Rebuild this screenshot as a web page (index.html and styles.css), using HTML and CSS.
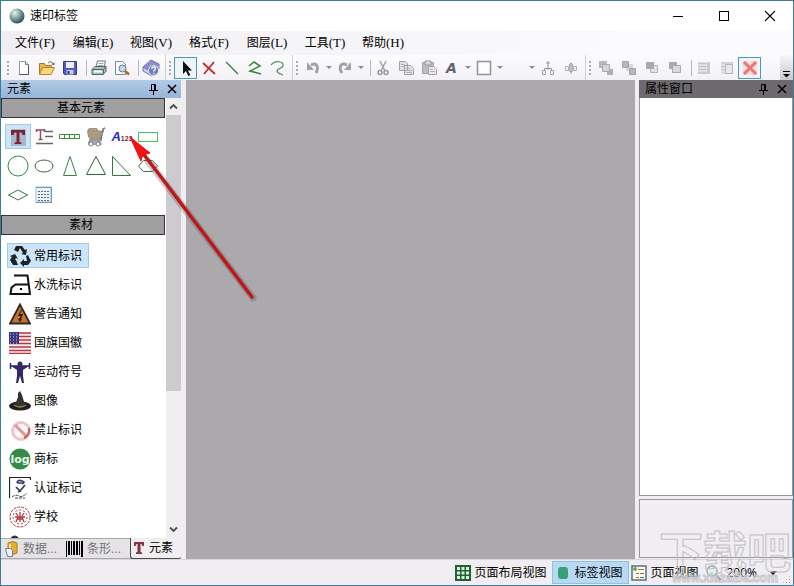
FILE: index.html
```
<!DOCTYPE html>
<html lang="zh-CN">

<head>
  <meta charset="UTF-8">
  <meta name="viewport" content="width=device-width, initial-scale=1.0">
  <title>速印标签</title>
  <link rel="stylesheet" href="styles.css">
</head>

<body>
  <div class="window">
    <header class="titlebar">
      <svg width="16" height="16" viewBox="0 0 16 16">
        <defs>
          <radialGradient id="ball" cx="35%" cy="30%" r="75%">
            <stop offset="0" stop-color="#eef5f0" />
            <stop offset="0.45" stop-color="#86a9a2" />
            <stop offset="1" stop-color="#2e3f5c" />
          </radialGradient>
        </defs>
        <circle cx="8" cy="8" r="7.5" fill="url(#ball)" />
      </svg>
      <h1 class="title">速印标签</h1>
      <div class="window-buttons">
        <button class="window-button" aria-label="最小化"><svg width="12" height="12"><path d="M1 6.500h10" stroke="#000" /></svg></button>
        <button class="window-button" aria-label="最大化"><svg width="12" height="12"><rect x="1.500" y="1.500" width="9" height="9" fill="none" stroke="#000" /></svg></button>
        <button class="window-button" aria-label="关闭"><svg width="12" height="12"><path d="M1 1l10 10M11 1L1 11" stroke="#000" stroke-width="1.100" /></svg></button>
      </div>
    </header>

    <nav class="menubar">
      <button class="menu">文件<span class="key">(F)</span></button>
      <button class="menu">编辑<span class="key">(E)</span></button>
      <button class="menu">视图<span class="key">(V)</span></button>
      <button class="menu">格式<span class="key">(F)</span></button>
      <button class="menu">图层<span class="key">(L)</span></button>
      <button class="menu">工具<span class="key">(T)</span></button>
      <button class="menu">帮助<span class="key">(H)</span></button>
    </nav>

    <div class="toolbar">
      <div class="strip">
        <span class="grip"></span>
        <button class="tool" aria-label="新建"><svg width="16" height="16"><path d="M3.500 1.500h6l3 3v10h-9z" fill="#fdfdff" stroke="#8a95ab" /><path d="M9.500 1.500v3h3" fill="#cfd8e6" stroke="#73809a" /><path d="M12.500 5v9.500h-9" fill="none" stroke="#46536e" /></svg></button>
        <button class="tool" aria-label="打开"><svg width="18" height="16"><path d="M1.500 14V3.500h5l1 2h6V8" fill="#e8b64a" stroke="#a87a20" /><path d="M1.500 14.500l3-7h12l-3.500 7z" fill="#fbd877" stroke="#b3842a" /><path d="M10 3q3-3 5 1" fill="none" stroke="#596a86" /><path d="M16.500 2v3h-3z" fill="#596a86" /></svg></button>
        <button class="tool" aria-label="保存"><svg width="16" height="16"><path d="M1.500 1.500h13v13h-12l-1-1z" fill="#5759bb" stroke="#3b3a88" /><path d="M4 2h8v6H4z" fill="#edf0fb" /><path d="M4.500 10h7v4.500h-7z" fill="#c9cce8" /><path d="M5.500 11h2v3h-2z" fill="#333572" /></svg></button>
        <span class="divider"></span>
        <button class="tool" aria-label="打印"><svg width="16" height="16"><path d="M5 7l1.500-6h8L13 7" fill="#f5f9fb" stroke="#6c7c80" /><path d="M7.500 3.500h5M7 5.500h5" stroke="#9aa" /><path d="M1 9.500L4 6.500h11v5l-3 3H1z" fill="#abc0b8" stroke="#4e6761" /><path d="M1 9.500h11.500v5M12.500 9.500l2.500-3" fill="none" stroke="#4e6761" /><path d="M3 11.500h8" stroke="#f4fff6" stroke-width="2" /></svg></button>
        <button class="tool" aria-label="打印预览"><svg width="16" height="16"><path d="M1.500 1.500h7l3 3v10h-10z" fill="#fafbff" stroke="#7b879d" /><circle cx="8.500" cy="8.500" r="3.500" fill="#c2d9ed" stroke="#6c7788" /><path d="M11 11l4 3.500" stroke="#a56b2b" stroke-width="2.500" /></svg></button>
        <span class="divider"></span>
        <button class="tool" aria-label="帮助"><svg width="18" height="18"><path d="M1 8l8-7 8 4-7 8z" fill="#8d90ca" stroke="#7276b4" /><path d="M1 8v4l9 5 7-7V5l-7 8z" fill="#c9cde8" stroke="#7276b4" /><circle cx="11.500" cy="11.500" r="5" fill="#6680b5" stroke="#e1e6f4" /><path d="M9.700 10q.3-2 2-2 1.900.2 1.700 1.800-.2 1-1.600 1.700v1M11.800 13.700v1.200" fill="none" stroke="#fff" stroke-width="1.300" /></svg></button>
      </div>
      <div class="strip">
        <span class="grip"></span>
        <button class="tool active" aria-label="选择"><svg width="16" height="18"><path d="M5 2v13l3-3 2.300 5 2-1-2.300-4.500H14z" fill="#111" /></svg></button>
        <button class="tool" aria-label="删除"><svg width="16" height="16"><path d="M2 3l12 11M13 2L3 14" stroke="#ca2a25" stroke-width="1.800" /></svg></button>
        <button class="tool" aria-label="直线"><svg width="16" height="16"><path d="M2 2l12 12" stroke="#2d7a3a" stroke-width="1.200" /></svg></button>
        <button class="tool" aria-label="折线"><svg width="16" height="16"><path d="M2 6l5-4 6 4-10 5 11 3" fill="none" stroke="#2c8a37" stroke-width="1.500" /></svg></button>
        <button class="tool" aria-label="曲线"><svg width="16" height="16"><path d="M1 5C5 0 14 1 13 6c-1 3-6 2-6 5 0 2 4 3 6 4" fill="none" stroke="#4d8c5e" stroke-width="1.200" /></svg></button>
      </div>
      <div class="strip">
        <span class="grip"></span>
        <button class="tool" aria-label="撤消"><svg width="16" height="16"><path d="M6 5c6-3 8 2 5 8" fill="none" stroke="#a2a2a6" stroke-width="3" /><path d="M2 2v8h7z" fill="#a2a2a6" /></svg></button>
        <button class="drop" aria-label="撤消列表"></button>
        <button class="tool" aria-label="重做"><svg width="16" height="16"><path d="M10 5C4 2 1 7 5 13" fill="none" stroke="#a2a2a6" stroke-width="3" /><path d="M14 2v8H7z" fill="#a2a2a6" /></svg></button>
        <button class="drop" aria-label="重做列表"></button>
        <span class="divider"></span>
        <button class="tool" aria-label="剪切"><svg width="16" height="16"><path d="M5 1l5 10M11 1L6 11" stroke="#a2a2a6" stroke-width="1.500" /><circle cx="5" cy="12.500" r="2" fill="none" stroke="#98989c" stroke-width="1.500" /><circle cx="11" cy="12.500" r="2" fill="none" stroke="#98989c" stroke-width="1.500" /></svg></button>
        <button class="tool" aria-label="复制"><svg width="16" height="16"><path d="M1.500 1.500h6l2 2v7h-8zM6.500 5.500h6l3 3v6h-9z" fill="#e2e2e4" stroke="#a2a2a6" /><path d="M3 4.500h4M3 6.500h3M8 8.500h4M8 10.500h6M8 12.500h6" stroke="#b2b2b5" /></svg></button>
        <button class="tool" aria-label="粘贴"><svg width="16" height="16"><path d="M1.500 2.500h11v11h-11z" fill="#bdbdc1" stroke="#a2a2a6" /><path d="M4 1h6v4H4z" fill="#d9d9dc" stroke="#9b9b9f" /><path d="M7.500 6.500h5l3 3v5h-8z" fill="#e9e9eb" stroke="#a2a2a6" /><path d="M9 9.500h3M9 11.500h5" stroke="#b2b2b5" /></svg></button>
        <button class="tool font-tool">A</button>
        <button class="drop" aria-label="字体列表"></button>
        <button class="tool" aria-label="边框"><svg width="16" height="16"><rect x="1.500" y="1.500" width="13" height="13" fill="#fdfdfd" stroke="#929296" stroke-width="1.500" /></svg></button>
        <button class="drop" aria-label="边框列表"></button>
        <button class="tool" aria-label="线型"></button>
        <button class="drop" aria-label="线型列表"></button>
        <button class="tool" aria-label="组合"><svg width="14" height="16"><path d="M7 1v9M5 3h4M3.500 10V8.500h7V10" fill="none" stroke="#98989c" /><path d="M1.500 10.500h3v4h-3zM9.500 10.500h3v4h-3z" fill="#f1f1f3" stroke="#a4a4a8" /></svg></button>
        <button class="tool" aria-label="取消组合"><svg width="14" height="16"><path d="M1.500 6.500h3v4h-3zM9.500 6.500h3v4h-3zM5.500 5.500h3v6h-3z" fill="#f1f1f3" stroke="#b0b0b4" /><path d="M7 3v11M5 5l2-2 2 2" fill="none" stroke="#98989c" /></svg></button>
      </div>
      <div class="strip last">
        <span class="grip"></span>
        <button class="tool" aria-label="置于顶层"><svg width="16" height="16"><path d="M1 1h8v7H1z" fill="#b8b8bb" /><path d="M9 9h6v6H9z" fill="#b0b0b4" /><path d="M4.500 4.500h7v7h-7z" fill="#d5d5d8" stroke="#a9a9ad" /></svg></button>
        <button class="tool" aria-label="置于底层"><svg width="16" height="16"><path d="M5 4h7v7H5z" fill="#d9d9dc" /><path d="M1.500 1.500h6v6h-6zM8.500 8.500h6v6h-6z" fill="#b8b8bc" stroke="#a4a4a8" /></svg></button>
        <button class="tool" aria-label="上移一层"><svg width="16" height="16"><path d="M6.500 5.500h7v7h-7z" fill="#e2e2e5" stroke="#b4b4b8" /><path d="M2 2h8v7H2z" fill="#aaaaae" /></svg></button>
        <button class="tool" aria-label="下移一层"><svg width="16" height="16"><path d="M2 2h8v7H2z" fill="#aaaaae" /><path d="M5.500 5.500h8v7h-8z" fill="#dadadd" stroke="#a9a9ad" /></svg></button>
        <span class="divider"></span>
        <button class="tool" aria-label="左侧窗格"><svg width="16" height="16"><path d="M2 2h12v12H2z" fill="#e0e0e3" /><path d="M11 2h3v12H2v-2h9z" fill="#cbcbcf" /><path d="M2 3.500h8M2 6.500h8M2 9.500h8" stroke="#c4c4c8" /></svg></button>
        <button class="tool" aria-label="右侧窗格"><svg width="16" height="16"><path d="M2 2h12v12H2z" fill="#e0e0e3" /><path d="M6.500 4.500h7v9h-7z" fill="#e8e8ea" stroke="#b4b4b8" /><path d="M2 3h12M2 6.500h3M2 9.500h3" stroke="#c4c4c8" /></svg></button>
        <button class="tool active" aria-label="显示网格"><svg width="16" height="16"><path d="M1 1h14v14H1z" fill="#f3d4d4" /><path d="M2 2l12 12M14 2L2 14" stroke="#ed7673" stroke-width="3" /><path d="M8 1v4M8 11v4M1 8h4M11 8h4" stroke="#fff" /></svg></button>
      </div>
      <button class="overflow" aria-label="更多"><svg width="9" height="8"><path d="M1 1.500h7" stroke="#000" /><path d="M1 4h7L4.500 7.500z" /></svg></button>
    </div>

    <main class="workspace">
      <aside class="panel elements">
        <div class="panel-head">
          <h2 class="panel-title">元素</h2>
          <button class="panel-button" aria-label="固定"><svg width="9" height="12"><path d="M2.500 7V1.500h4V7M0 7.500h9M4.500 8v4" fill="none" stroke="#000" /><path d="M5.500 2v5" stroke="#000" /></svg></button>
          <button class="panel-button" aria-label="关闭"><svg width="10" height="10"><path d="M1 1l8 8M9 1L1 9" stroke="#000" stroke-width="1.500" /></svg></button>
        </div>
        <div class="panel-body">
          <div class="groups">
            <h3 class="group-title">基本元素</h3>
            <div class="shapes">
              <button class="shape selected" aria-label="文本"><svg width="20" height="20"><rect x="3" y="2" width="15" height="17" fill="#a6bac9" /><path d="M3 3h14v5h-2.500L13.500 5.500h-2V15l2 .5V17h-7v-1.500l2-.5V5.500h-2L5.500 8H3z" fill="#7c2434" /></svg></button>
              <button class="shape" aria-label="多行文本"><svg width="20" height="20"><path d="M2 3h9M6.500 3v9M4.500 12.500h4M2.500 2v3M10.500 2v3" stroke="#93525a" stroke-width="1.500" /><path d="M11 4.500h8M11 9.500h8M2 16.500h17" stroke="#666" stroke-width="1.500" /></svg></button>
              <button class="shape" aria-label="条码"><svg width="22" height="20"><path d="M.5 7.500h20v4H.5zM5.500 7.500v4M10.500 7.500v4M15.500 7.500v4" fill="none" stroke="#38913c" /></svg></button>
              <button class="shape" aria-label="图片"><svg width="22" height="22"><path d="M2 5l2-3h8l1 2 3 1v8H5L3 11z" fill="#a19588" /><path d="M5 4h6M4 7h10M5 10h9" stroke="#c9a26e" /><path d="M20 2l-2 1-2 11H4M16 6l3-1" fill="none" stroke="#77777b" stroke-width="1.500" /><path d="M3 15h13l1 4H3z" fill="#a9a9ad" /><circle cx="6" cy="18" r="2" fill="#fff" stroke="#777" /><circle cx="13" cy="18" r="2" fill="#fff" stroke="#777" /></svg></button>
              <button class="shape counter" aria-label="序列号"><span class="letter">A</span><span class="digits">123</span></button>
              <button class="shape" aria-label="矩形"><svg width="22" height="20"><rect x="1.500" y="5.500" width="19" height="9" fill="none" stroke="#4fc45a" /></svg></button>
              <button class="shape" aria-label="圆"><svg width="22" height="22"><circle cx="11" cy="11" r="10" fill="none" stroke="#358b3f" /></svg></button>
              <button class="shape" aria-label="椭圆"><svg width="22" height="20"><ellipse cx="11" cy="10" rx="9" ry="6" fill="none" stroke="#3d6644" /></svg></button>
              <button class="shape" aria-label="锐角三角形"><svg width="22" height="22"><path d="M11 1.500L4.500 20.500h13z" fill="none" stroke="#36823e" /></svg></button>
              <button class="shape" aria-label="三角形"><svg width="22" height="22"><path d="M11 1.500L1.500 19.500h19z" fill="none" stroke="#306a38" /></svg></button>
              <button class="shape" aria-label="直角三角形"><svg width="22" height="22"><path d="M1.500 1.500v19h18z" fill="none" stroke="#2f7b38" /></svg></button>
              <button class="shape" aria-label="六边形"><svg width="22" height="20"><path d="M1.500 10l5-5.500h9L20.500 10l-5 5.500h-9z" fill="none" stroke="#3d7145" /></svg></button>
              <button class="shape" aria-label="菱形"><svg width="22" height="20"><path d="M1.500 10L11 5l9.500 5-9.500 5z" fill="none" stroke="#357a3c" /></svg></button>
              <button class="shape" aria-label="表格"><svg width="18" height="18"><rect x="1" y="1" width="15" height="15" fill="#eef5fa" stroke="#9ac0d8" /><path d="M1 1.500h16M1 16.500h16M16.500 1v16" stroke="#7899b6" /><path d="M3 5.500h12M3 8.500h12M3 11.500h12M3 14.500h12" stroke="#596a83" stroke-dasharray="2 1" /></svg></button>
            </div>
            <h3 class="group-title">素材</h3>
            <div class="materials">
              <button class="material selected"><svg width="22" height="22"><g fill="#1c2326"><path d="M7 1h6l3 4 2-1-1 6-5-1 2-1-3-5-2 4-4-2z" /><path d="M17 11l2-1 3 6-3 4h-4v2l-4-4 4-4v2h3z" /><path d="M9 20H4l-3-5 2-3-2-1 5-2 3 5-2-1-1 2h1z" /></g></svg>常用标识</button>
              <button class="material"><svg width="22" height="22"><path d="M5 1.500h13.500l2.500 18.500H1.500l1-6.500 4-3h13" fill="none" stroke="#111" stroke-width="2" /><path d="M11 14h2v2h-2z" /></svg>水洗标识</button>
              <button class="material"><svg width="22" height="22"><path d="M11 1.500L1 20.500h20z" fill="#bd7433" stroke="#34271e" stroke-width="1.800" /><path d="M12 7l-3 6h3l-2 3h-1l2 3 2-3h-1l2-5h-3l2-4z" fill="#2d1712" /></svg>警告通知</button>
              <button class="material"><svg width="22" height="22"><path d="M0 0h22v22H0z" fill="#eee" /><path d="M0 1h22M0 4.500h22M0 8h22M0 11.500h22M0 15h22M0 18.500h22M0 21.500h22" stroke="#bd3542" stroke-width="1.700" /><path d="M0 0h10v12H0z" fill="#35367d" /><path d="M1 2h8M1 5h8M1 8h8M1 11h8" stroke="#d8daf1" stroke-dasharray="1 2" /></svg>国旗国徽</button>
              <button class="material"><svg width="22" height="22"><circle cx="11" cy="3" r="2.500" fill="#342668" /><path d="M1 5h20M1.500 2v6M20.500 2v6" stroke="#342668" stroke-width="1.500" /><path d="M2 5h18l-6 4v6l1 7h-2l-2-7-2 7H7l1-7V9z" fill="#342668" /></svg>运动符号</button>
              <button class="material"><svg width="22" height="22"><ellipse cx="11" cy="16" rx="11" ry="4.500" fill="#202020" /><path d="M6 15l3-8V3l2-2 2 4 3 10q-5 4-10 0z" fill="#353230" /><path d="M5 15q6 4 12 0" fill="none" stroke="#988845" stroke-width="1.500" /></svg>图像</button>
              <button class="material"><svg width="22" height="22"><circle cx="12" cy="12" r="8.500" fill="#fdf6f6" stroke="#edc6c6" stroke-width="3" /><path d="M6 6l12 12" stroke="#e09797" stroke-width="3" /><path d="M20 9q1 7-5 10" fill="none" stroke="#c96060" stroke-width="2" /></svg>禁止标识</button>
              <button class="material"><svg width="22" height="22"><circle cx="11" cy="11" r="10.500" fill="#348a46" /><text class="logo-text" x="11" y="15" text-anchor="middle">log</text></svg>商标</button>
              <button class="material"><svg width="22" height="22"><path d="M.5 21V.5h21V3" fill="none" stroke="#222" stroke-width="1.200" /><path d="M8 6q1-4 5-2 4 1 0 3M8 6h6M7 10l4 4 5-6M9 15l3-1" fill="none" stroke="#343b6c" stroke-width="1.700" /><path d="M3 20q4-3 7-1t8-3M6 21h10" fill="none" stroke="#444" stroke-dasharray="3 1" /></svg>认证标记</button>
              <button class="material"><svg width="22" height="22" fill="none" stroke="#ad383c"><circle cx="11" cy="11" r="10" stroke-dasharray="3 1" /><circle cx="11" cy="11" r="7" stroke-dasharray="2 2" /><path d="M7 7l2 3M15 7l-2 3M11 6v10M7 16l2-5M15 16l-2-5M6 11h10M8 13h6" stroke-width="1.300" /></svg>学校</button>
              <button class="material" aria-label="其他"><svg width="22" height="22"><path d="M2 2q4-3 7 0l3 5H5z" fill="#333" /></svg></button>
            </div>
          </div>
          <div class="scrollbar">
            <button class="scroll-button" aria-label="向上"><svg width="9" height="7"><path d="M1 5.500L4.500 2 8 5.500" fill="none" stroke="#505050" stroke-width="1.800" /></svg></button>
            <div class="track"><div class="thumb"></div></div>
            <button class="scroll-button" aria-label="向下"><svg width="9" height="7"><path d="M1 1.500L4.500 5 8 1.500" fill="none" stroke="#505050" stroke-width="1.800" /></svg></button>
          </div>
        </div>
        <div class="tabs">
          <button class="tab"><svg width="16" height="18"><path d="M4 3q5-3 9 0v10q-4 3-9 0z" fill="#e4ae34" stroke="#aa7c22" /><path d="M6 4v9" stroke="#ffe495" stroke-width="2" /><path d="M1.500 8.500h5l2 2v6h-5z" fill="#eef5ff" stroke="#6b7f9c" /></svg>数据...</button>
          <button class="tab barcode"><svg width="17" height="16"><path d="M0 0h1v16H0zM2 0h2v14H2zM5 0h1v14H5zM7 0h2v14H7zM10 0h2v14h-2zM13 0h1v14h-1zM15 0h2v16h-2z" /></svg>条形...</button>
          <button class="tab current"><svg width="10" height="12"><path d="M0 0h10v4H8.500L7.500 2H6.500v8l1.500.5V12H2v-1.500L3.500 10V2h-1l-1 2H0z" fill="#8b303e" /></svg>元素</button>
        </div>
      </aside>

      <section class="canvas"></section>

      <aside class="panel properties">
        <div class="panel-head dark">
          <h2 class="panel-title">属性窗口</h2>
          <button class="panel-button" aria-label="固定"><svg width="9" height="12"><path d="M2.500 7V1.500h4V7M0 7.500h9M4.500 8v4" fill="none" stroke="#000" /><path d="M5.500 2v5" stroke="#000" /></svg></button>
          <button class="panel-button" aria-label="关闭"><svg width="10" height="10"><path d="M1 1l8 8M9 1L1 9" stroke="#000" stroke-width="1.500" /></svg></button>
        </div>
        <div class="property-list"></div>
        <div class="property-help"></div>
      </aside>
    </main>

    <footer class="statusbar">
      <button class="view"><svg width="16" height="16"><path d="M0 0h16v16H0z" fill="#245e36" /><path d="M2 2h3v3H2zM6.500 2h3v3h-3zM11 2h3v3h-3zM2 6.500h3v3H2zM6.500 6.500h3v3h-3zM11 6.500h3v3h-3zM2 11h3v3H2zM6.500 11h3v3h-3zM11 11h3v3h-3z" fill="#d6f5d3" /></svg>页面布局视图</button>
      <button class="view current"><svg width="16" height="16"><rect x="3" y="2" width="10" height="12" rx="3" fill="#36a178" /></svg>标签视图</button>
      <button class="view"><svg width="16" height="16"><rect x="1" y="1" width="14" height="14" fill="#fff9e9" stroke="#51708a" stroke-width="1.500" /><circle cx="4" cy="4" r="2" fill="#6daa48" /><path d="M7 4.500h6M5 8.500h3M5 12.500h3" stroke="#b56c32" /><path d="M9 8.500h4M9 12.500h4" stroke="#596c8c" /></svg>页面视图</button>
      <button class="zoom"><svg width="16" height="16"><circle cx="6" cy="6" r="5" fill="#e4f1f5" stroke="#8ba99f" stroke-width="1.300" /><path d="M10 10l4.500 5" stroke="#777baf" stroke-width="2.500" /></svg>200%<i class="caret"></i></button>
      <span class="resizer"></span>
    </footer>
  </div>

  <!-- pointer to the serial number element -->
  <svg class="pointer" width="140" height="180">
    <path d="M24 29L129 166" stroke="#555" stroke-opacity="0.3" stroke-width="7" stroke-linecap="round" />
    <path d="M18 20l110 145" stroke="#bf181c" stroke-width="3.500" stroke-linecap="round" />
    <path d="M6 5l20 16-4 1-4 3-1 4z" fill="#f31313" stroke="#dc1515" />
  </svg>

  <div class="watermark">
    <div class="watermark-name">下载吧</div>
    <div class="watermark-site">www.xiazaiba.com</div>
  </div>
</body>

</html>
```
FILE: styles.css
```
* {
  box-sizing: border-box;
}

body {
  margin: 0;
  height: 100vh;
  overflow: hidden;
  position: relative;
  font-family: "Liberation Sans", "Noto Sans CJK SC", sans-serif;
  font-size: 12px;
  line-height: 16px;
  color: #000;
}

button {
  display: flex;
  align-items: center;
  flex: none;
  margin: 0;
  padding: 0;
  border: 0;
  background: none;
  color: inherit;
  font: inherit;
  white-space: nowrap;
}

svg {
  display: block;
  flex: none;
}

h1,
h2,
h3 {
  margin: 0;
  font-size: 12px;
  font-weight: normal;
}

.window {
  display: flex;
  flex-direction: column;
  height: 100%;
  border: 1px solid #3c7d9d;
  background: #f0eef1;
}

/* title and menus */
.titlebar {
  display: flex;
  align-items: center;
  flex: none;
  height: 30px;
  padding-left: 8px;
  gap: 5px;
  background: #fff;
}

.window-buttons {
  display: flex;
  margin-left: auto;
}

.window-button {
  justify-content: center;
  width: 46px;
  height: 28px;
}

.menubar {
  display: flex;
  flex: none;
  height: 24px;
  padding-left: 5px;
  background: linear-gradient(90deg, #f0eef2, #fbfafc 80%);
}

.menu {
  justify-content: center;
  min-width: 58px;
}

.key {
  font-family: "Liberation Serif", serif;
  font-size: 13px;
}

/* toolbar */
.toolbar {
  display: flex;
  flex: none;
  height: 25px;
  padding-left: 5px;
  gap: 2px;
  background: linear-gradient(#fcfbfd, #f3f1f5);
}

.strip {
  display: flex;
  align-items: center;
  padding-right: 3px;
  border-right: 1px solid #cfcfd4;
}

.strip.last {
  border-right: 0;
}

.grip {
  width: 6px;
  height: 15px;
  background: radial-gradient(circle, #aaaab0 1px, transparent 1px) 0 0 / 4px 4px repeat-y;
}

.divider {
  width: 6px;
  height: 16px;
  border-right: 1px solid #b8b8bf;
}

.tool {
  justify-content: center;
  width: 23px;
  height: 22px;
}

.tool.active {
  border: 1px solid #4d99b8;
  background: #eef5fa;
}

.font-tool {
  font-family: "DejaVu Sans", sans-serif;
  font-size: 14px;
  font-weight: bold;
  font-style: italic;
  color: #626268;
}

.drop {
  justify-content: center;
  width: 9px;
  height: 22px;
}

.drop::after,
.caret {
  content: "";
  border: 3px solid transparent;
  border-top-color: #8d8d93;
  border-bottom: 0;
}

.overflow {
  justify-content: center;
  align-items: flex-end;
  width: 13px;
  margin-left: auto;
  padding-bottom: 2px;
  background: linear-gradient(#f6f5f8, #c9c8ce);
}

/* docked panels */
.workspace {
  display: flex;
  flex: 1;
  min-height: 0;
}

.panel {
  display: flex;
  flex-direction: column;
  flex: none;
}

.elements {
  width: 180px;
}

.properties {
  width: 154px;
  margin-left: 4px;
}

.panel-head {
  display: flex;
  align-items: center;
  flex: none;
  height: 18px;
  padding: 0 4px 0 6px;
  gap: 7px;
  background: linear-gradient(#b2cae5, #96b5d8);
}

.panel-head.dark {
  padding-right: 6px;
  background: #6c6a6d;
}

.panel-title {
  flex: 1;
}

.panel-button {
  justify-content: center;
  width: 11px;
}

.panel-body {
  display: flex;
  flex: 1;
  min-height: 0;
}

.groups {
  flex: 1;
  overflow: hidden;
  background: #fff;
}

.group-title {
  height: 20px;
  margin-right: 1px;
  padding-right: 4px;
  border: 1px solid #343436;
  background: #a09ea1;
  line-height: 18px;
  text-align: center;
}

.shapes {
  display: grid;
  grid-template-columns: repeat(6, 26px);
  grid-auto-rows: 25px;
  row-gap: 4px;
  padding: 6px 4px 8px;
}

.shape {
  justify-content: center;
}

.shape.selected,
.material.selected {
  border: 1px solid #a1c9e8;
  background: #cde5f8;
}

.counter .letter {
  font-size: 13px;
  font-weight: bold;
  font-style: italic;
  color: #2a2cc0;
}

.counter .digits {
  padding-top: 5px;
  font-size: 7px;
  font-weight: bold;
  color: #8a2634;
}

.materials {
  display: flex;
  flex-direction: column;
  align-items: flex-start;
  gap: 4px;
  padding: 8px 6px 0;
}

.material {
  height: 25px;
  padding: 0 6px 0 1px;
  gap: 3px;
  border: 1px solid transparent;
}

.logo-text {
  font-family: "DejaVu Sans", sans-serif;
  font-size: 11px;
  font-weight: bold;
  fill: #e9f7e9;
}

.scrollbar {
  display: flex;
  flex-direction: column;
  width: 15px;
}

.scroll-button {
  justify-content: center;
  height: 17px;
}

.track {
  flex: 1;
}

.thumb {
  height: 68%;
  background: #cdcbce;
}

.tabs {
  display: flex;
  flex: none;
  height: 21px;
  background: #e5e3e6;
  border-top: 1px solid #a9a7ab;
  border-bottom: 1px solid #a9a7ab;
}

.tab {
  width: 62px;
  padding-left: 3px;
  gap: 3px;
  color: #737277;
}

.tab.barcode {
  width: 67px;
  gap: 4px;
}

.tab.current {
  flex: 1;
  margin: -1px 0;
  padding-left: 3px;
  gap: 5px;
  border: 1px solid #4a4a4c;
  border-top: 0;
  border-right: 0;
  border-radius: 0 0 3px 3px;
  background: #f0eef1;
  color: #000;
}

.canvas {
  flex: 1;
  margin-left: 5px;
  background: #aba9ac;
}

.property-list {
  flex: 1;
  border: 1px solid #98969a;
  border-top: 0;
  background: #fff;
}

.property-help {
  height: 59px;
  margin: 3px 0 1px;
  border: 1px solid #98969a;
}

/* status bar */
.statusbar {
  display: flex;
  justify-content: flex-end;
  flex: none;
  height: 26px;
  padding: 1px 2px 1px 0;
  border-top: 1px solid #d9d7da;
}

.view {
  padding: 0 6px 0 2px;
  gap: 3px;
}

.view.current {
  border: 1px solid #8fc1e6;
  background: #b9d9f2;
}

.zoom {
  gap: 4px;
  padding-left: 2px;
  font-family: "Open Sans", sans-serif;
}

.zoom .caret {
  margin: 0 5px 0 8px;
  border-width: 4px 4px 0;
  border-top-color: #000;
}

.resizer {
  align-self: flex-end;
  width: 9px;
  height: 9px;
  background: radial-gradient(circle, #9b999d 1px, transparent 1px) 0 0 / 3px 3px;
  clip-path: polygon(100% 0, 100% 100%, 0 100%);
}

/* drawn over the window */
.pointer {
  position: absolute;
  left: 124px;
  top: 132px;
  fill: none;
  pointer-events: none;
}

.watermark {
  position: absolute;
  right: 3px;
  bottom: 2px;
  text-align: center;
  pointer-events: none;
}

.watermark-name {
  font-family: "Noto Sans CJK SC", sans-serif;
  font-size: 44px;
  font-weight: bold;
  line-height: 44px;
  color: transparent;
  -webkit-text-stroke: 1px #c3c1c5;
}

.watermark-site {
  font-size: 12px;
  font-weight: bold;
  line-height: 12px;
  color: transparent;
  -webkit-text-stroke: 1px #c8c6ca;
}
```
